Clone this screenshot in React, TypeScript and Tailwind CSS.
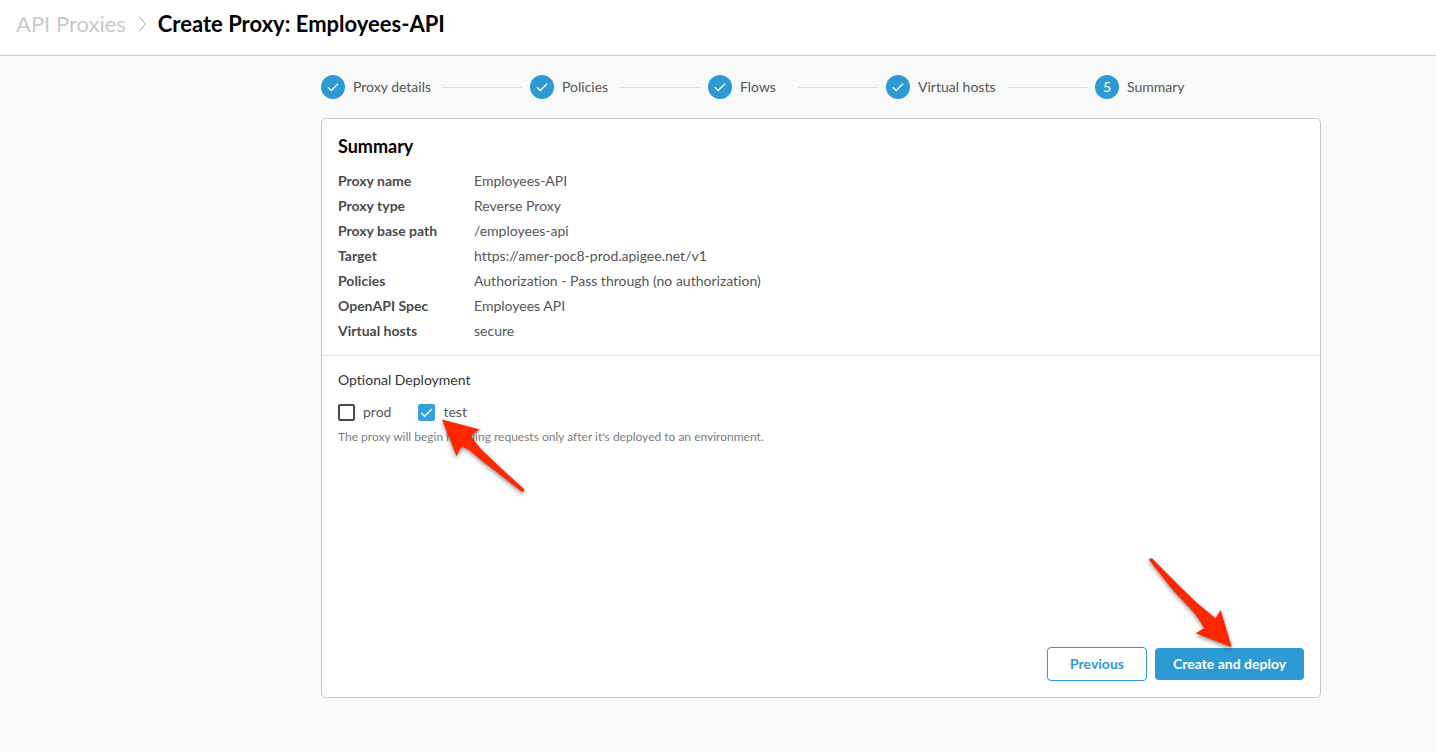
import React from "react";

type Step = { label: string; done: boolean; width: string };

const steps: Step[] = [
  { label: "Proxy details", done: true, width: "min-w-[81px]" },
  { label: "Policies", done: true, width: "min-w-[50px]" },
  { label: "Flows", done: true, width: "min-w-[50px]" },
  { label: "Virtual hosts", done: true, width: "min-w-[81px]" },
  { label: "Summary", done: false, width: "min-w-[50px]" },
];

const details: [string, string][] = [
  ["Proxy name", "Employees-API"],
  ["Proxy type", "Reverse Proxy"],
  ["Proxy base path", "/employees-api"],
  ["Target", "https://amer-poc8-prod.apigee.net/v1"],
  ["Policies", "Authorization - Pass through (no authorization)"],
  ["OpenAPI Spec", "Employees API"],
  ["Virtual hosts", "secure"],
];

function Check({ className }: { className: string }) {
  return (
    <svg viewBox="0 0 18 18" className={className} fill="none" stroke="white" strokeWidth="1.5" aria-hidden="true">
      <path d="M3.3 9.3 7 13 14.8 5.2" />
    </svg>
  );
}

function Stepper() {
  return (
    <ol className="flex items-center gap-2 whitespace-nowrap">
      {steps.map((step, i) => (
        <li key={step.label} className="flex items-center gap-2">
          {i > 0 && <span className="h-px w-20 bg-[#dcdedd]" />}
          <span className="flex size-6 items-center justify-center rounded-full bg-[#2e9ad4] text-sm text-white">
            {step.done ? <Check className="size-4" /> : i + 1}
          </span>
          <span className={step.width}>{step.label}</span>
        </li>
      ))}
    </ol>
  );
}

function Environment({ name, checked = false, children }: { name: string; checked?: boolean; children?: React.ReactNode }) {
  return (
    <label className="relative flex items-center gap-2">
      <span className="relative flex size-[17px]">
        <input
          type="checkbox"
          defaultChecked={checked}
          className="peer size-[17px] appearance-none rounded-xs border-2 border-[#4a4a4a] bg-white checked:border-[#35a1dc] checked:bg-[#35a1dc]"
        />
        <Check className="pointer-events-none absolute inset-0 hidden size-[17px] peer-checked:block" />
      </span>
      {name}
      {children}
    </label>
  );
}

export default function App() {
  return (
    <div className="flex min-h-screen flex-col bg-[#f8f9f9] font-['Lato',sans-serif] text-sm text-[#555] [font-variant-ligatures:none]">
      <header className="border-b border-[#c8cacb] bg-white px-4 pt-2 pb-[15px]">
        <nav className="flex items-center gap-2 text-[22px] leading-8">
          <a href="#proxies" className="text-[#c9c9c9]">API Proxies</a>
          <svg viewBox="0 0 14 20" className="h-5 w-4" fill="none" stroke="#a8a8a8" aria-hidden="true">
            <path d="M4 2.5 10.5 10 4 17.5" />
          </svg>
          <h1 className="font-bold text-black">Create Proxy: Employees-API</h1>
        </nav>
      </header>

      <main className="pt-[19px] pr-4 pb-8 pl-[222px]">
        <div className="mx-auto flex max-w-[1000px] flex-col gap-[19px]">
          <Stepper />

          <section className="flex min-h-[580px] flex-col rounded-[5px] border border-[#c7c8c9] bg-white">
            <div className="border-b border-[#dfe1e1] px-4 pt-[15px] pb-3">
              <h2 className="mb-[10px] text-lg leading-6 font-bold text-black">Summary</h2>
              <dl className="leading-[25px]">
                {details.map(([term, value]) => (
                  <div key={term} className="flex">
                    <dt className="w-[136px] font-bold text-[#4a4a4a]">{term}</dt>
                    <dd>{value}</dd>
                  </div>
                ))}
              </dl>
            </div>

            <fieldset className="mt-[14px] px-4">
              <legend className="text-[#333]">Optional Deployment</legend>
              <div className="mt-3 flex gap-[27px]">
                <Environment name="prod" />
                <Environment name="test" checked>
                  <svg viewBox="0 0 90 82" className="pointer-events-none absolute top-4 left-5 z-10 h-[82px] w-[90px] max-w-none drop-shadow-[0_2px_2px_rgba(0,0,0,0.45)]" fill="#ff2600" aria-hidden="true">
                    <path d="M4 1.5 42 11.5 33 17Q37 25 45 33L64 51 86 71Q87 74 84 74L43 42 31 32Q26 29 23.5 28.5L18.5 38Z" />
                  </svg>
                </Environment>
              </div>
              <p className="mt-[7px] text-xs leading-4 text-[#7c7c7c]">
                The proxy will begin handling requests only after it's deployed to an environment.
              </p>
            </fieldset>

            <div className="mt-auto flex items-center justify-end gap-2 p-4">
              <button type="button" className="h-[34px] min-w-[100px] rounded border border-[#2e9ad4] bg-white px-4 font-bold text-[#2e9ad4]">
                Previous
              </button>
              <div className="relative">
                <button type="button" className="h-8 min-w-[149px] rounded bg-[#2e9ad4] px-4 font-bold text-white">
                  Create and deploy
                </button>
                <svg viewBox="0 0 90 94" className="pointer-events-none absolute -top-[91px] -left-2 h-[94px] w-[90px] max-w-none drop-shadow-[0_2px_2px_rgba(0,0,0,0.45)]" fill="#ff2600" aria-hidden="true">
                  <path d="M2 3Q2 1 5 1.3L33 29.5 50 46 68.5 61.3 73.7 53 84.7 90.3 48.7 76.3 57 71.3Q52 61 43 51.3L26.5 34Z" />
                </svg>
              </div>
            </div>
          </section>
        </div>
      </main>
    </div>
  );
}
